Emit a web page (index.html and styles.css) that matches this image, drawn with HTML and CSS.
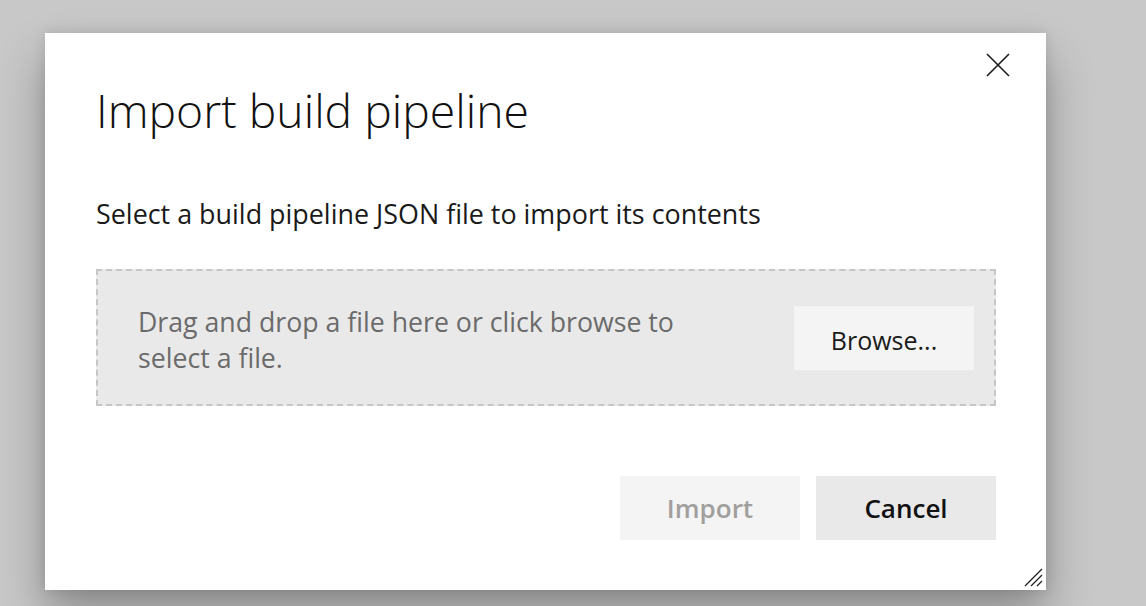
FILE: index.html
```html
<!DOCTYPE html>
<html lang="en">
<head>
<meta charset="utf-8">
<title>Import build pipeline</title>
<link rel="stylesheet" href="styles.css">
</head>
<body>
<div class="dialog">
  <button class="close" aria-label="Close">
    <svg width="24" height="24" viewBox="0 0 24 24"><path d="M1 1 L23 23 M23 1 L1 23" stroke="#1b1b1b" stroke-width="1.6" fill="none"/></svg>
  </button>
  <h1 class="title">Import build pipeline</h1>
  <p class="subtitle">Select a build pipeline JSON file to import its contents</p>
  <div class="dropzone">
    <p class="droptext">Drag and drop a file here or click browse to select a file.</p>
    <button class="btn browse">Browse...</button>
  </div>
  <div class="footer">
    <button class="btn primary" disabled>Import</button>
    <button class="btn cancel">Cancel</button>
  </div>
  <svg class="grip" width="20" height="20" viewBox="0 0 20 20"><path d="M2 19 L19 2 M8 19 L19 8 M14 19 L19 14" stroke="#222" stroke-width="1.3" fill="none"/></svg>
</div>
</body>
</html>
```
FILE: styles.css
```css
html, body {
  margin: 0;
  padding: 0;
}
body {
  background: #c8c8c8;
  width: 1146px;
  height: 606px;
  overflow: hidden;
  font-family: "Open Sans", "Segoe UI", sans-serif;
}
.dialog {
  position: relative;
  box-sizing: border-box;
  width: 1001px;
  height: 557px;
  margin: 33px 0 0 45px;
  background: #fff;
  padding: 49px 50px 0 51px;
  box-shadow: 0 26px 44px rgba(0,0,0,0.3), 0 0 12px rgba(0,0,0,0.12);
}
.close {
  position: absolute;
  top: 20px;
  left: 941px;
  width: 24px;
  height: 24px;
  padding: 0;
  border: 0;
  background: none;
}
.close svg { display: block; }
.title {
  margin: 0;
  font-weight: 300;
  font-size: 46.3px;
  line-height: 58px;
  color: #111;
}
.subtitle {
  margin: 57px 0 0;
  font-size: 26.9px;
  line-height: 34px;
  color: #1a1a1a;
}
.dropzone {
  margin-top: 38px;
  box-sizing: border-box;
  width: 900px;
  height: 137px;
  background: #e9e9e9;
  border: 2px dashed #c6c6c6;
  display: flex;
  align-items: center;
  justify-content: space-between;
  padding: 5px 20px 0 40px;
}
.droptext {
  margin: 0;
  width: 580px;
  font-size: 26.7px;
  line-height: 36px;
  color: #6b6b6b;
}
.btn {
  width: 180px;
  height: 64px;
  border: 0;
  font-family: inherit;
  font-size: 26px;
  padding: 0;
}
.browse {
  background: #f4f4f4;
  color: #1a1a1a;
  font-size: 25px;
  margin-top: -5px;
  padding-top: 5px;
}
.footer {
  margin-top: 70px;
  width: 900px;
  display: flex;
  justify-content: flex-end;
  gap: 16px;
}
.primary {
  background: #f4f4f4;
  color: #a19f9d;
  font-weight: 600;
}
.cancel {
  background: #e9e9e9;
  color: #111;
  font-weight: 600;
}
.grip {
  position: absolute;
  right: 3px;
  bottom: 3px;
}
```
